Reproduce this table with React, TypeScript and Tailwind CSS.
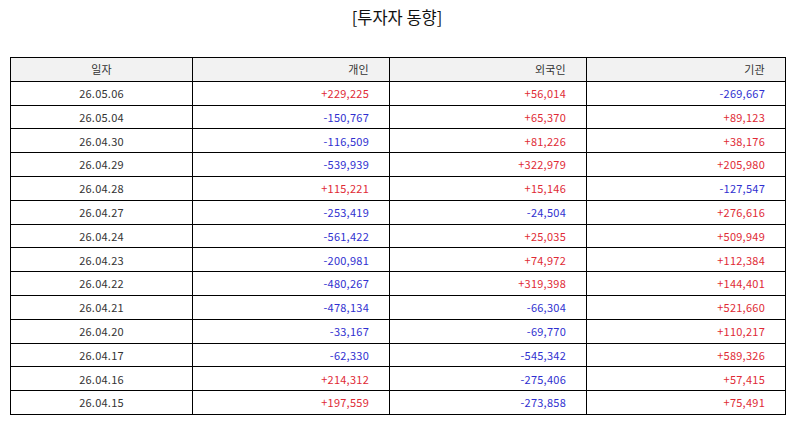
const rows: [string, string, string, string][] = [
  ['26.05.06', '+229,225', '+56,014', '-269,667'],
  ['26.05.04', '-150,767', '+65,370', '+89,123'],
  ['26.04.30', '-116,509', '+81,226', '+38,176'],
  ['26.04.29', '-539,939', '+322,979', '+205,980'],
  ['26.04.28', '+115,221', '+15,146', '-127,547'],
  ['26.04.27', '-253,419', '-24,504', '+276,616'],
  ['26.04.24', '-561,422', '+25,035', '+509,949'],
  ['26.04.23', '-200,981', '+74,972', '+112,384'],
  ['26.04.22', '-480,267', '+319,398', '+144,401'],
  ['26.04.21', '-478,134', '-66,304', '+521,660'],
  ['26.04.20', '-33,167', '-69,770', '+110,217'],
  ['26.04.17', '-62,330', '-545,342', '+589,326'],
  ['26.04.16', '+214,312', '-275,406', '+57,415'],
  ['26.04.15', '+197,559', '-273,858', '+75,491'],
];

function Num({ v }: { v: string }) {
  const up = v.startsWith('+');
  return (
    <td className={`border border-black pr-5 text-right ${up ? 'text-[#e02a35]' : 'text-[#3030d0]'}`}>{v}</td>
  );
}

export default function App() {
  return (
    <div className="w-[794px] h-[425px] bg-white font-['Noto_Sans_CJK_KR',sans-serif] text-[#333]">
      <h1 className="pt-[5px] h-[57px] text-center text-[16.5px] leading-[24px] text-[#111]">[투자자 동향]</h1>
      <div className="px-[10px]">
        <table className="w-[776px] border-collapse border border-black text-[11px] tracking-[0.25px] table-fixed">
          <colgroup>
            <col className="w-[182px]" />
            <col className="w-[197px]" />
            <col className="w-[197px]" />
            <col />
          </colgroup>
          <thead>
            <tr className="h-[23.8px] bg-[#f2f2f2]">
              <th className="border border-black font-normal text-center">일자</th>
              <th className="border border-black font-normal text-right pr-5">개인</th>
              <th className="border border-black font-normal text-right pr-5">외국인</th>
              <th className="border border-black font-normal text-right pr-5">기관</th>
            </tr>
          </thead>
          <tbody>
            {rows.map((r) => (
              <tr key={r[0]} className="h-[23.8px]">
                <td className="border border-black text-center">{r[0]}</td>
                <Num v={r[1]} />
                <Num v={r[2]} />
                <Num v={r[3]} />
              </tr>
            ))}
          </tbody>
        </table>
      </div>
    </div>
  );
}
